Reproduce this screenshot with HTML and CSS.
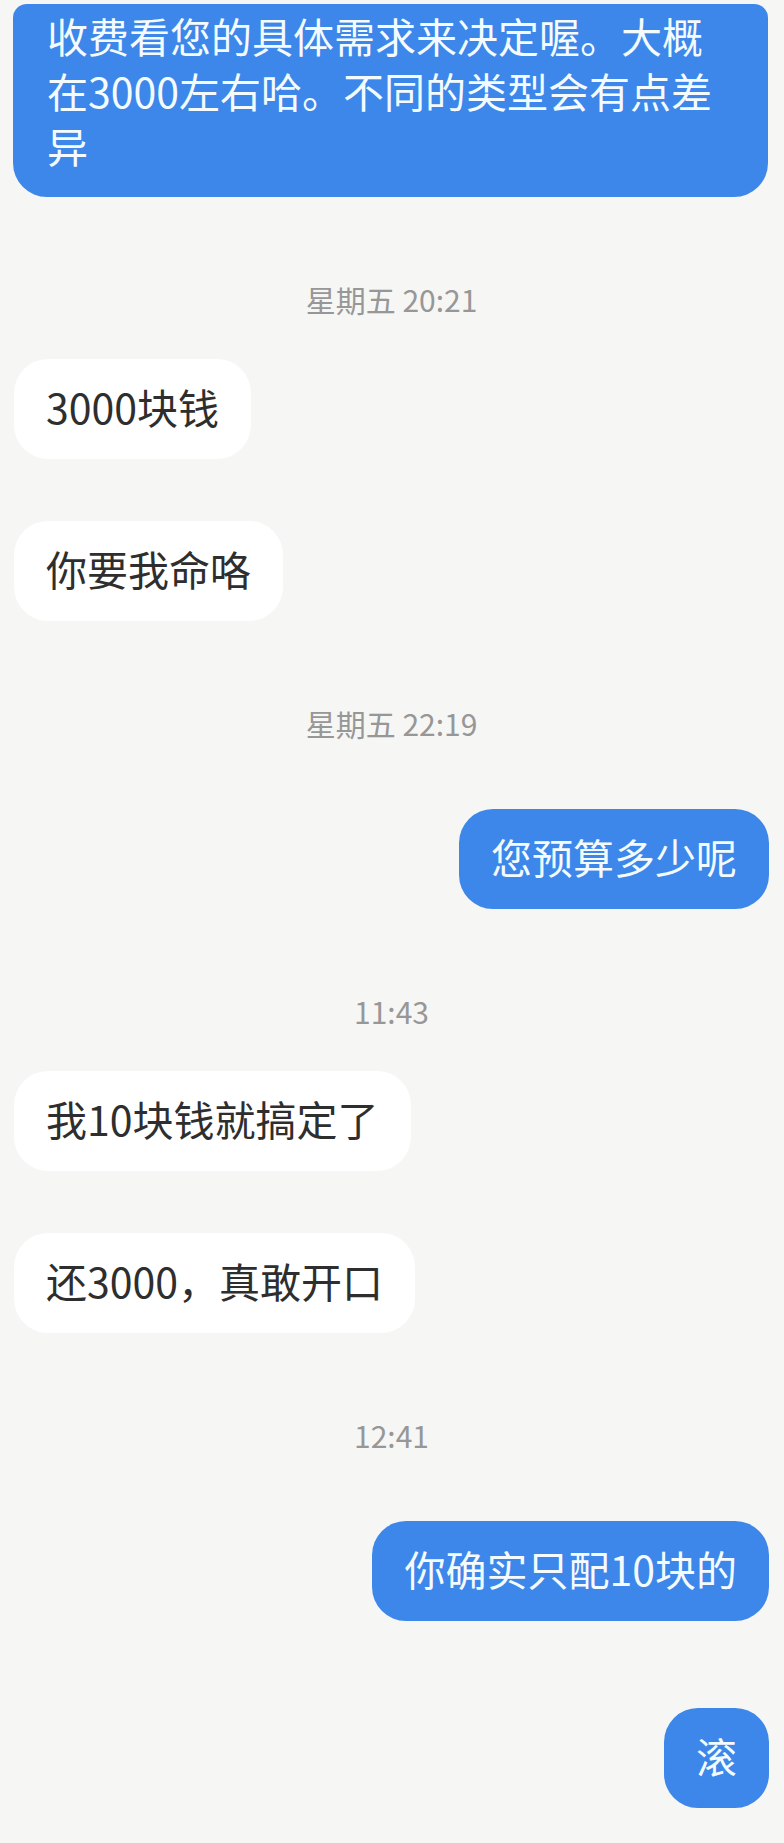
FILE: index.html
```html
<!DOCTYPE html>
<html lang="zh-CN">
<head>
    <meta charset="UTF-8">
    <meta name="viewport" content="width=device-width, initial-scale=1.0">
    <title>聊天记录</title>
    <link rel="stylesheet" href="styles.css">
</head>
<body>
    <div class="chat">
        <div class="msg out first">收费看您的具体需求来决定喔。大概在3000左右哈。不同的类型会有点差异</div>

        <div class="time">星期五 20:21</div>
        <div class="msg in">3000块钱</div>
        <div class="msg in">你要我命咯</div>

        <div class="time">星期五 22:19</div>
        <div class="msg out">您预算多少呢</div>

        <div class="time">11:43</div>
        <div class="msg in">我10块钱就搞定了</div>
        <div class="msg in">还3000，真敢开口</div>

        <div class="time">12:41</div>
        <div class="msg out">你确实只配10块的</div>
        <div class="msg out">滚</div>
    </div>
</body>
</html>
```

FILE: styles.css
```css
body {
    margin: 0;
    background-color: #f6f6f4;
    font-family: "Noto Sans CJK SC", "Noto Sans", sans-serif;
}
.chat {
    display: flex;
    flex-direction: column;
    padding: 4px 15px 40px 14px;
}
.msg {
    max-width: 100%;
    box-sizing: border-box;
    padding: 19px 32px 25px;
    font-size: 41px;
    line-height: 56px;
    border-radius: 34px;
}
.in {
    align-self: flex-start;
    background: #fff;
    color: #2e2e2e;
}
.out {
    align-self: flex-end;
    background: #3c87e9;
    color: #f4fbff;
}
.first {
    align-self: stretch;
    margin-left: -1px;
    padding: 4px 34px 24px;
    line-height: 55px;
    border-radius: 14px 14px 34px 34px;
}
.time {
    margin-top: 82px;
    height: 40px;
    line-height: 40px;
    text-align: center;
    font-size: 30px;
    color: #979797;
}
.time + .in {
    margin-top: 40px;
}
.in + .in {
    margin-top: 62px;
}
.time + .out {
    margin-top: 66px;
}
.out + .out {
    margin-top: 87px;
}
```
